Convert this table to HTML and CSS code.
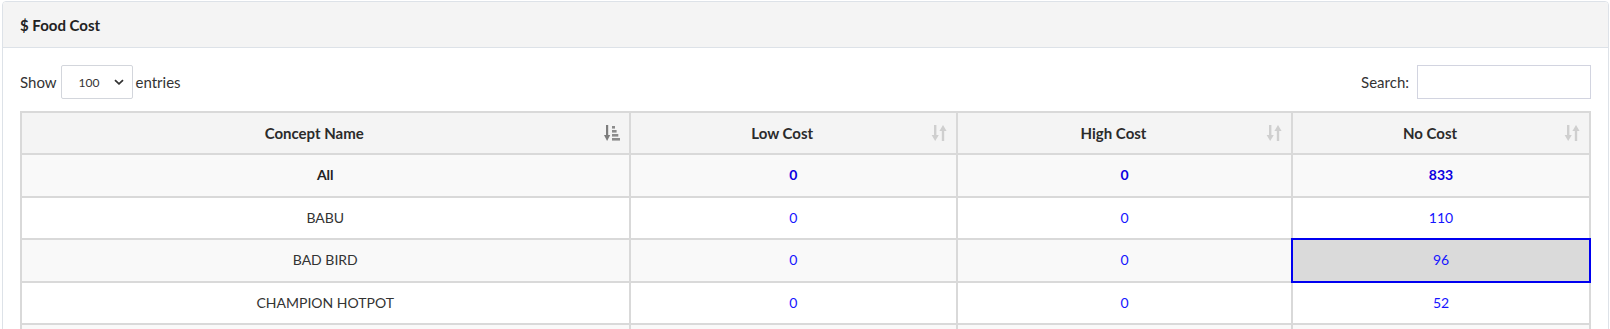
FILE: index.html
```html
<!DOCTYPE html>
<html lang="en">
<head>
<meta charset="utf-8">
<title>Food Cost</title>
<link rel="stylesheet" href="styles.css">
</head>
<body>
<div class="card">
  <div class="card-header">
    <h3 class="card-title">$ Food Cost</h3>
  </div>
  <div class="card-body">
    <div class="controls">
      <label class="length">Show
        <span class="select"><span class="select-value">100</span>
          <svg class="chev" width="10" height="6" viewBox="0 0 10 6"><path d="M1 1.2 L5 4.8 L9 1.2" fill="none" stroke="#333" stroke-width="1.8"/></svg>
        </span>
        entries</label>
      <label class="search">Search: <span class="search-input"></span></label>
    </div>
    <table class="grid">
      <colgroup>
        <col class="c1"><col class="c2"><col class="c3"><col class="c4">
      </colgroup>
      <thead>
        <tr>
          <th>Concept Name
            <svg class="sort sort-active" width="16" height="16" viewBox="0 0 16 16"><rect x="2" y="0" width="2.2" height="11" fill="#7d7d7d"/><polygon points="0,10 6.2,10 3.1,16" fill="#7d7d7d"/><rect x="8" y="1" width="3" height="2.6" fill="#8c8c8c"/><rect x="8" y="5" width="4.6" height="2.6" fill="#8c8c8c"/><rect x="8" y="9" width="6.3" height="2.6" fill="#8c8c8c"/><rect x="8" y="13" width="8" height="2.6" fill="#8c8c8c"/></svg>
          </th>
          <th>Low Cost
            <svg class="sort" width="16" height="16" viewBox="0 0 16 16"><rect x="3" y="0" width="2.4" height="11" fill="#cfcfcf"/><polygon points="0.6,10 7.8,10 4.2,16" fill="#cfcfcf"/><polygon points="8.4,6 15.6,6 12,0" fill="#cfcfcf"/><rect x="10.8" y="5" width="2.4" height="11" fill="#cfcfcf"/></svg>
          </th>
          <th>High Cost
            <svg class="sort" width="16" height="16" viewBox="0 0 16 16"><rect x="3" y="0" width="2.4" height="11" fill="#cfcfcf"/><polygon points="0.6,10 7.8,10 4.2,16" fill="#cfcfcf"/><polygon points="8.4,6 15.6,6 12,0" fill="#cfcfcf"/><rect x="10.8" y="5" width="2.4" height="11" fill="#cfcfcf"/></svg>
          </th>
          <th>No Cost
            <svg class="sort" width="16" height="16" viewBox="0 0 16 16"><rect x="3" y="0" width="2.4" height="11" fill="#cfcfcf"/><polygon points="0.6,10 7.8,10 4.2,16" fill="#cfcfcf"/><polygon points="8.4,6 15.6,6 12,0" fill="#cfcfcf"/><rect x="10.8" y="5" width="2.4" height="11" fill="#cfcfcf"/></svg>
          </th>
        </tr>
      </thead>
      <tbody>
        <tr class="total">
          <td>All</td><td class="num">0</td><td class="num">0</td><td class="num">833</td>
        </tr>
        <tr>
          <td>BABU</td><td class="num">0</td><td class="num">0</td><td class="num">110</td>
        </tr>
        <tr>
          <td>BAD BIRD</td><td class="num">0</td><td class="num">0</td><td class="num focus">96</td>
        </tr>
        <tr>
          <td>CHAMPION HOTPOT</td><td class="num">0</td><td class="num">0</td><td class="num">52</td>
        </tr>
        <tr class="more">
          <td></td><td></td><td></td><td></td>
        </tr>
      </tbody>
    </table>
  </div>
</div>
</body>
</html>
```
FILE: styles.css
```css
html, body {
  margin: 0;
  padding: 0;
  background: #fff;
}
body {
  font-family: "Lato", "Liberation Sans", sans-serif;
  font-size: 15px;
  color: #333;
}
.card {
  margin: 1px 1px 0 2px;
  border: 1px solid #dde2e8;
  border-radius: 4px;
  background: #fff;
  overflow: hidden;
}
.card-header {
  height: 45px;
  background: #f4f4f4;
  border-bottom: 1px solid #dde2e8;
  display: flex;
  align-items: center;
  padding: 0 17px;
}
.card-title {
  margin: 0;
  font-size: 15px;
  font-weight: 700;
  color: #222;
}
.card-body {
  padding: 17px 17px 0 17px;
}
.controls {
  display: flex;
  justify-content: space-between;
  align-items: center;
  height: 34px;
  margin-bottom: 12px;
}
.length, .search {
  display: flex;
  align-items: center;
  color: #333;
}
.select {
  display: inline-flex;
  align-items: center;
  box-sizing: border-box;
  width: 72px;
  height: 34px;
  margin: 0 3px 0 4px;
  padding: 0 8px 0 17px;
  border: 1px solid #d3d6dc;
  border-radius: 2px;
  background: #fff;
}
.select-value {
  font-size: 12px;
  color: #333;
  flex: 1;
}
.chev {
  display: block;
}
.search-input {
  display: inline-block;
  box-sizing: border-box;
  width: 174px;
  height: 34px;
  margin-left: 8px;
  border: 1px solid #d2d4e0;
}
.grid {
  width: 100%;
  border-collapse: collapse;
  table-layout: fixed;
  border: 2px solid #d6d6d6;
}
.grid col.c1 { width: 608.5px; }
.grid col.c2 { width: 327.5px; }
.grid col.c3 { width: 335px; }
.grid th, .grid td {
  border: 2px solid #d9d9d9;
  text-align: center;
}
.grid th {
  position: relative;
  background: #f4f4f4;
  font-weight: 700;
  font-size: 15px;
  line-height: 20px;
  padding: 10px 30px 10px 8px;
  color: #2b2b2b;
}
.sort {
  position: absolute;
  right: 9px;
  top: 12px;
}
.grid td {
  font-size: 14px;
  line-height: 20.5px;
  padding: 10px 8px;
  color: #333;
}
.grid tbody tr:nth-child(odd) td {
  background: #f9f9f9;
}
.grid tbody tr:nth-child(even) td {
  background: #fff;
}
.grid tr.more td {
  height: 20.5px;
}
.grid td.num {
  color: #1515ff;
}
.grid tr.total td {
  font-weight: 700;
  color: #222;
}
.grid tr.total td.num {
  color: #0c00e0;
}
.grid tbody tr td.focus {
  background: #dadada;
  outline: 2px solid #0000f0;
  outline-offset: -1px;
}
```
